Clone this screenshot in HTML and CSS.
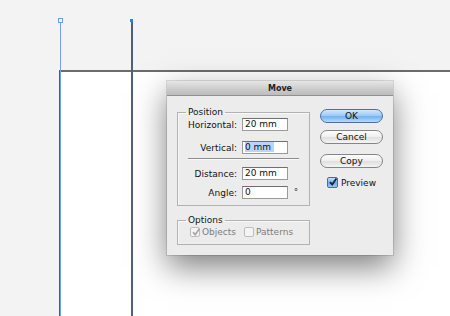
FILE: index.html
```html
<!DOCTYPE html>
<html lang="en">
<head>
  <meta charset="UTF-8" />
  <title>Move</title>
  <link rel="stylesheet" href="styles.css">
</head>
<body>
  <div class="guide guide-light"><span class="handle handle-hollow"></span></div>
  <div class="guide guide-dark"><span class="handle handle-solid"></span></div>
  <div class="artboard"></div>

  <div class="dialog">
    <div class="titlebar">Move</div>
    <div class="dialog-body">
      <div class="groups">
        <fieldset class="group">
          <legend>Position</legend>
          <div class="row">
            <label>Horizontal:</label>
            <span class="field">20 mm</span>
          </div>
          <div class="row row-vertical">
            <label>Vertical:</label>
            <span class="field"><span class="selected">0 mm</span></span>
          </div>
          <div class="sep"></div>
          <div class="row row-distance">
            <label>Distance:</label>
            <span class="field">20 mm</span>
          </div>
          <div class="row row-angle">
            <label>Angle:</label>
            <span class="field">0</span>
            <span class="degree">°</span>
          </div>
        </fieldset>

        <fieldset class="group group-options">
          <legend>Options</legend>
          <div class="checks">
            <span class="check disabled">
              <span class="box"><svg viewBox="0 0 10 10"><path d="M2 5.2 L4.2 7.6 L8.4 1.6" /></svg></span>
              Objects
            </span>
            <span class="check disabled">
              <span class="box"></span>
              Patterns
            </span>
          </div>
        </fieldset>
      </div>

      <div class="actions">
        <button class="btn btn-default">OK</button>
        <button class="btn btn-cancel">Cancel</button>
        <button class="btn btn-copy">Copy</button>
        <span class="check preview">
          <span class="box"><svg viewBox="0 0 10 10"><path d="M2 5.2 L4.2 7.6 L8.4 1.6" /></svg></span>
          Preview
        </span>
      </div>
    </div>
  </div>
</body>
</html>
```

FILE: styles.css
```css
html, body {
  margin: 0;
  height: 316px;
  overflow: hidden;
}
body {
  position: relative;
  background: #f3f3f3;
  font-family: "DejaVu Sans", "Lucida Grande", sans-serif;
  font-size: 9px;
  color: #111;
}

/* canvas */
.artboard {
  margin: 70px 0 0 59px;
  height: 246px;
  background: #fff;
  border-top: 2px solid #6c6c6c;
  border-left: 2px solid #4d5670;
}
.guide {
  position: absolute;
  top: 20px;
  bottom: 0;
  width: 1px;
  z-index: 2;
}
.guide-light {
  left: 60px;
  background: #76a0f6;
}
.guide-dark {
  left: 131px;
  width: 2px;
  background: #535d80;
}
.handle {
  position: absolute;
  display: block;
}
.handle-hollow {
  top: -2px;
  left: -2px;
  width: 3px;
  height: 3px;
  border: 1px solid #6f98f2;
  background: #fff;
}
.handle-solid {
  top: -1px;
  left: -1px;
  width: 3px;
  height: 3px;
  background: #3d78f2;
}

/* dialog */
.dialog {
  position: absolute;
  left: 167px;
  top: 81px;
  width: 226px;
  height: 174px;
  background: #ececec;
  box-shadow: 0 12px 30px rgba(0, 0, 0, 0.5), 0 0 0 1px rgba(0, 0, 0, 0.12);
  z-index: 3;
}
.titlebar {
  height: 14px;
  line-height: 15px;
  text-align: center;
  font-size: 8px;
  font-weight: bold;
  color: #222;
  background: linear-gradient(#e6e6e6, #cbcbcb 60%, #bcbcbc);
  border-bottom: 1px solid #8f8f8f;
}
.dialog-body {
  display: flex;
  gap: 10px;
  padding: 10px 10px 0;
}
.groups {
  width: 133px;
}
.group {
  box-sizing: border-box;
  width: 133px;
  margin: 0;
  padding: 0 6px 6px;
  border: 1px solid #b2b2b2;
  box-shadow: inset 1px 1px 0 #f8f8f8;
}
.group legend {
  padding: 0 2px;
  margin-left: 2px;
  line-height: 12px;
}
.group-options {
  margin-top: 8px;
}

.row {
  display: flex;
  align-items: center;
  gap: 5px;
  height: 13px;
}
.row label {
  width: 53px;
  text-align: right;
}
.row-vertical { margin-top: 10px; }
.row-distance { margin-top: 7px; }
.row-angle { margin-top: 6px; }
.field {
  box-sizing: border-box;
  width: 46px;
  height: 13px;
  line-height: 11px;
  padding-left: 2px;
  background: #fff;
  border: 1px solid #9a9a9a;
  border-top-color: #6f6f6f;
}
.selected {
  background: #b5d5fd;
  padding-right: 3px;
}
.degree {
  margin-left: 1px;
  font-size: 8px;
}
.sep {
  margin: 4px 4px 0;
  border-top: 1px solid #8c8c8c;
  border-bottom: 1px solid #fafafa;
}

/* checkboxes */
.checks {
  display: flex;
  align-items: center;
  gap: 8px;
  height: 12px;
  margin-left: 6px;
}
.check {
  display: flex;
  align-items: center;
  gap: 2px;
}
.box {
  box-sizing: border-box;
  width: 10px;
  height: 10px;
  border: 1px solid #8a8a8a;
  border-radius: 2px;
  background: linear-gradient(#fff, #e4e4e4);
}
.box svg {
  display: block;
  width: 10px;
  height: 10px;
  margin: -1px 0 0 0;
  fill: none;
  stroke-width: 1.6;
}
.check.disabled {
  color: #7c7c7c;
}
.check.disabled .box {
  border-color: #bdbdbd;
  background: #f4f4f4;
}
.check.disabled svg {
  stroke: #a2a2a2;
}

/* buttons */
.actions {
  width: 63px;
  padding-top: 3px;
  display: flex;
  flex-direction: column;
  align-items: center;
}
.btn {
  box-sizing: border-box;
  width: 63px;
  height: 14px;
  padding: 0;
  border: 1px solid #858585;
  border-radius: 7px;
  font-family: inherit;
  font-size: 9px;
  line-height: 12px;
  color: #111;
  background: linear-gradient(#fdfdfd, #eeeeee 50%, #dedede 55%, #f6f6f6);
}
.btn-default {
  border-color: #4f6ea6;
  background: linear-gradient(#d2e8fc, #97c8f6 50%, #72b2f2 55%, #b5dcfc);
}
.btn-cancel { margin-top: 7px; }
.btn-copy { margin-top: 10px; }
.preview {
  margin-top: 9px;
  gap: 3px;
}
.preview .box {
  width: 11px;
  height: 11px;
  border-color: #4c6c9e;
  background: linear-gradient(#c8e0f8, #6fa8e6 55%, #9ccaf3);
}
.preview svg {
  stroke: #17243f;
  stroke-width: 1.8;
}
```
